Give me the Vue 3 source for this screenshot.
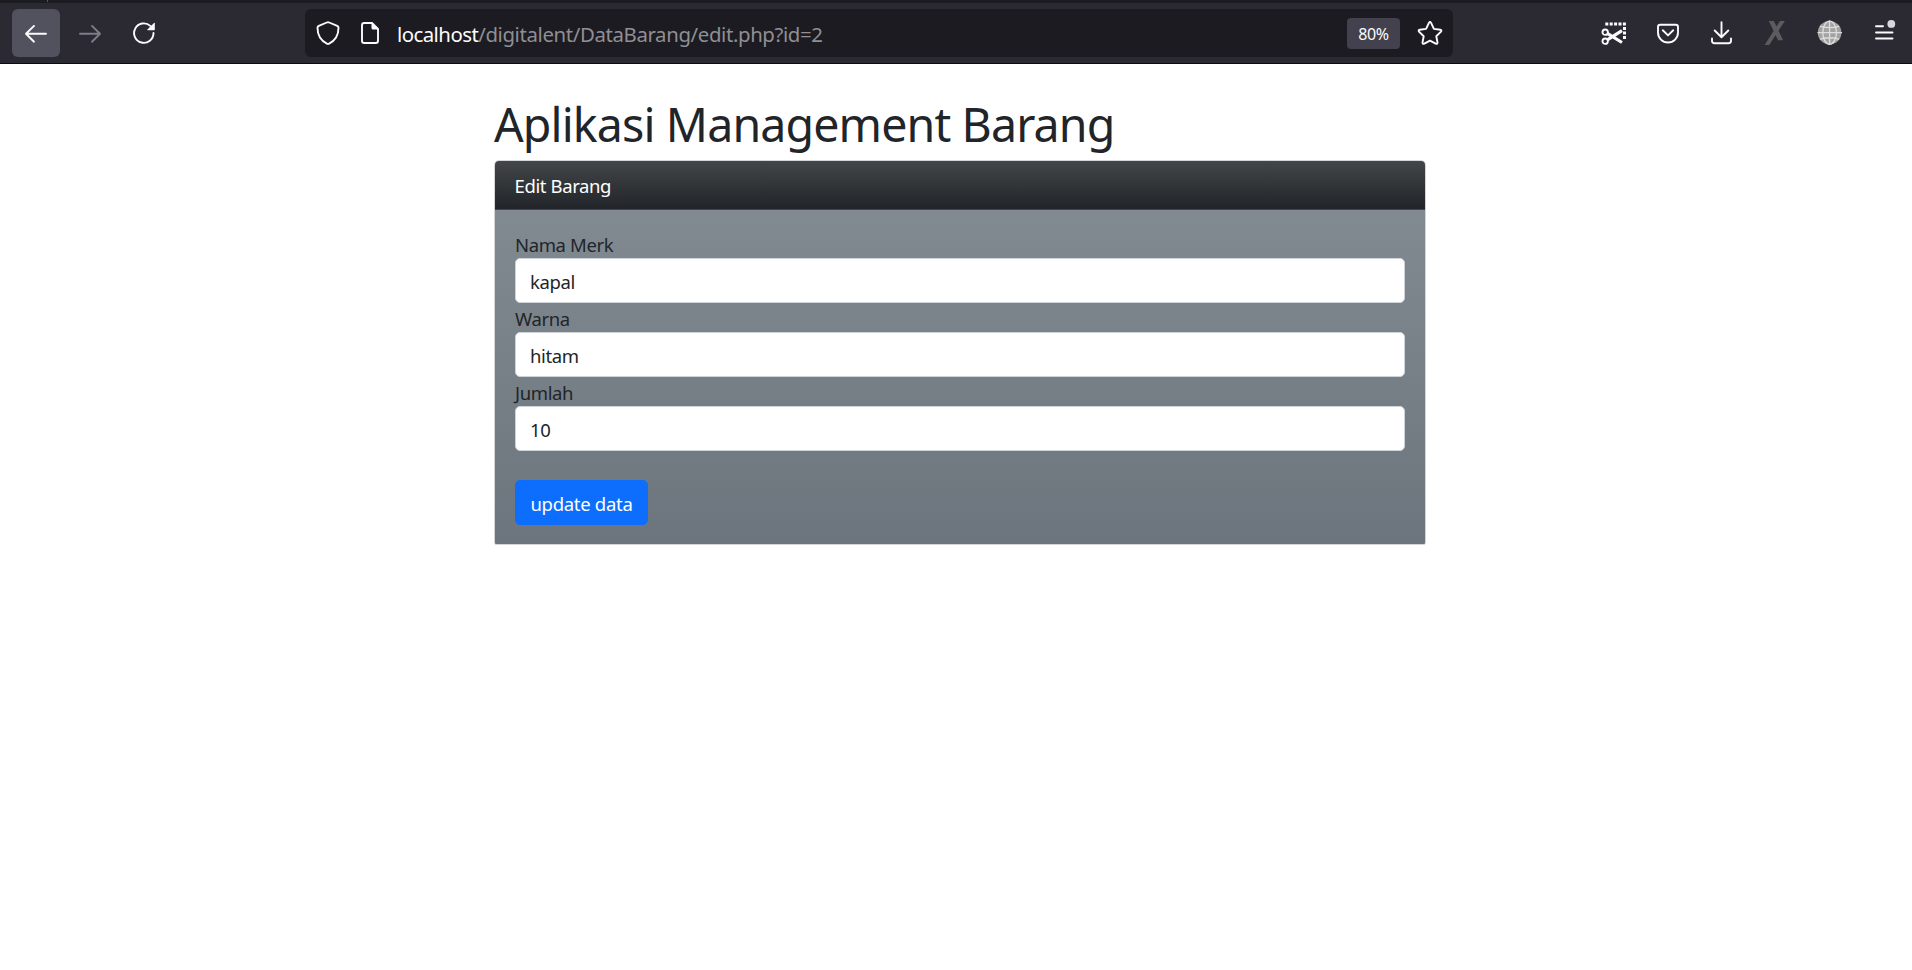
<template>
  <div class="window">
    <div class="tabstrip"><span class="tabstrip__separator"></span></div>

    <header class="toolbar">
      <div class="toolbar__group">
        <button class="toolbar__btn toolbar__btn--active" aria-label="Back">
          <svg class="icon" viewBox="0 0 24 24">
            <path d="M22 12.800H2.400M10 4.900L2 12.800l8 7.900" />
          </svg>
        </button>
        <button class="toolbar__btn toolbar__btn--disabled" aria-label="Forward">
          <svg class="icon" viewBox="0 0 24 24">
            <path d="M2 12.800H21.600M14 4.900l8 7.900l-8 7.900" />
          </svg>
        </button>
        <button class="toolbar__btn" aria-label="Reload">
          <svg class="icon" viewBox="0 0 24 24">
            <path d="M18.3 4.9A9.7 9.7 0 1 0 21.5 12" />
            <path class="fill" d="M22 1.9q.8-.7.8.4v6.3q0 .7-.7.7h-6.3q-1.1 0-.4-.8z" />
          </svg>
        </button>
      </div>

      <div class="urlbar">
        <svg class="icon urlbar__shield" viewBox="0 0 24 24">
          <path d="M12 1.2c.4 0 .8.1 1.2.3l8 3.4c.9.4 1.3 1 1.3 1.9C22.5 14.700 19 19.700 13.100 22.700c-.8.4-1.400.4-2.200 0C5 19.700 1.500 14.700 1.500 6.800c0-.9.4-1.500 1.300-1.900l8-3.400c.4-.2.8-.3 1.200-.3z" />
        </svg>
        <svg class="icon urlbar__page" viewBox="0 0 24 24">
          <path d="M14 2H6.300Q4 2 4 4.300v15.400Q4 22 6.300 22h11.400Q20 22 20 19.700V8z" />
          <path class="fill" d="M13.500 1.500V7q0 1.500 1.500 1.500h5.500z" />
        </svg>
        <span class="urlbar__text"><b>{{ url.host }}</b>{{ url.path }}</span>
        <span class="urlbar__zoom">80%</span>
        <svg class="icon urlbar__star" viewBox="0 0 24 24">
          <path d="M10.900 1.900q1.100-1.700 2.200 0l2.800 6l6.400.8q1.700.5.7 1.900l-4.700 4.600l1.200 6.300q0 1.900-1.800 1.200L12 19.600l-5.700 3.100q-1.800.7-1.800-1.200l1.200-6.300L1 10.600q-1-1.400.7-1.900l6.400-.8z" />
        </svg>
      </div>

      <div class="toolbar__group">
        <button class="toolbar__btn" aria-label="Screenshot">
          <svg class="icon" viewBox="0 0 24 24">
            <path class="dash" d="M3.300 3.100H24M22.500 6.100V18" />
            <circle cx="3.200" cy="11.200" r="2.700" />
            <circle cx="3.200" cy="20.200" r="2.700" />
            <path class="blade" d="M5.300 18.900L20 9.600M5.300 12.300L20 21.500" />
          </svg>
        </button>
        <button class="toolbar__btn" aria-label="Pocket">
          <svg class="icon" viewBox="0 0 24 24">
            <path d="M4.200 3.800h15.600q2.200 0 2.200 2.200v5.500a10 10 0 0 1-20 0V6q0-2.200 2.200-2.200z" />
            <path d="M6.800 9.300L12 14.400l5.200-5.100" />
          </svg>
        </button>
        <button class="toolbar__btn" aria-label="Downloads">
          <svg class="icon" viewBox="0 0 24 24">
            <path d="M11.500 1.300v14.700M4.700 9.500l6.800 6.700L18.300 9.500" />
            <path d="M2 17.500v2.300q0 2.500 2.500 2.500h14q2.500 0 2.500-2.500v-2.300" />
          </svg>
        </button>
        <button class="toolbar__btn" aria-label="Extension">
          <svg class="icon" viewBox="0 0 24 24">
            <path class="letter" d="M4.800 0h5l9.300 19.200h-5zM16 0h4.800L5.200 24H.6z" />
          </svg>
        </button>
        <button class="toolbar__btn" aria-label="Language">
          <svg class="icon icon--globe" viewBox="0 0 24 24">
            <circle cx="11.600" cy="11.700" r="11.800" />
            <path d="M11.600 0v23.400M0 11.700h23.500M2.500 5.300Q11.600 8 20.700 5.300M2.500 18.100Q11.600 15.400 20.700 18.100" />
            <ellipse cx="11.600" cy="11.700" rx="6.800" ry="11.600" />
          </svg>
        </button>
        <button class="toolbar__btn" aria-label="Menu">
          <svg class="icon" viewBox="0 0 24 24">
            <path d="M4 5.300h7M4 11.500h16.500M4 17.500h16.500" />
            <circle class="dot" cx="19.300" cy="2.900" r="3.900" />
          </svg>
        </button>
      </div>
    </header>

    <main class="container">
      <h1 class="title">Aplikasi Management Barang</h1>

      <section class="card">
        <div class="card__header">Edit Barang</div>
        <form class="card__body" @submit.prevent>
          <div v-for="field in fields" :key="field.name" class="form-group">
            <label class="form-group__label" :for="field.name">{{ field.label }}</label>
            <input
              :id="field.name"
              v-model="field.value"
              class="form-group__input"
              type="text"
              autocomplete="off"
            />
          </div>
          <button class="btn" type="submit">update data</button>
        </form>
      </section>
    </main>
  </div>
</template>

<script setup>
import { reactive } from 'vue'

const url = {
  host: 'localhost',
  path: '/digitalent/DataBarang/edit.php?id=2',
}

const fields = reactive([
  { name: 'merk', label: 'Nama Merk', value: 'kapal' },
  { name: 'warna', label: 'Warna', value: 'hitam' },
  { name: 'jumlah', label: 'Jumlah', value: '10' },
])
</script>

<style>
body {
  margin: 0;
  background: #fff;
}
</style>

<style scoped>
.window {
  height: 970px;
  overflow: hidden;
  background: #fff;
  color: #212529;
  font-family: 'Noto Sans', 'Open Sans', sans-serif;
  font-size: 18.5px;
  letter-spacing: -0.38px;
}

/* ---------- Browser toolbar ---------- */
.tabstrip {
  display: flex;
  height: 3px;
  padding-left: 47px;
  background: #1c1b22;
}

.tabstrip__separator {
  width: 1px;
  height: 2px;
  background: #55545e;
}

.toolbar {
  display: flex;
  align-items: center;
  box-sizing: border-box;
  height: 61px;
  padding: 0 4px 0 12px;
  border-bottom: 1px solid #0c0c0d;
  background: #2b2a33;
}

.toolbar__group {
  display: flex;
  gap: 6px;
}

.toolbar__btn {
  display: flex;
  align-items: center;
  justify-content: center;
  width: 48px;
  height: 48px;
  padding: 0;
  border: none;
  border-radius: 6px;
  background: transparent;
  color: #fbfbfe;
}

.toolbar__btn--active {
  background: #52525e;
}

.toolbar__btn--disabled {
  color: #7e7d86;
}

.icon {
  flex: none;
  width: 24px;
  height: 24px;
  overflow: visible;
  fill: none;
  stroke: currentColor;
  stroke-width: 1.9;
  stroke-linecap: round;
  stroke-linejoin: round;
}

.icon .fill,
.icon .dot {
  fill: currentColor;
  stroke: none;
}

.icon .dot {
  fill: #d7d7db;
}

.icon .dash {
  stroke-width: 3;
  stroke-dasharray: 3 1.4;
  stroke-linecap: butt;
}

.icon .blade {
  stroke-width: 3.2;
  stroke-linecap: butt;
}

.icon .letter {
  fill: #5c5c5e;
  stroke: none;
}

.icon--globe {
  fill: #a3a3a3;
  stroke: #dedede;
  stroke-width: 1.3;
}

.icon--globe path,
.icon--globe ellipse {
  fill: none;
}

.icon--globe circle {
  stroke: none;
}

.urlbar {
  display: flex;
  align-items: center;
  box-sizing: border-box;
  width: 1148px;
  height: 48px;
  margin: 0 auto 0 137px;
  padding: 0 11px;
  border-radius: 6px;
  background: #1c1b22;
  color: #fbfbfe;
}

.urlbar__page {
  margin-left: 18px;
}

.urlbar__text {
  margin-left: 15px;
  padding-top: 2px;
  color: #8f8f94;
  font-size: 20.4px;
  letter-spacing: -0.38px;
}

.urlbar__text b {
  color: #fbfbfe;
  font-weight: 400;
  letter-spacing: -0.55px;
}

.urlbar__zoom {
  width: 53px;
  height: 31px;
  margin-left: auto;
  border-radius: 4px;
  background: #42414d;
  font-size: 16px;
  line-height: 32px;
  text-align: center;
}

.urlbar__star {
  margin-left: 18px;
}

/* ---------- Page ---------- */
.container {
  box-sizing: border-box;
  width: 932px;
  margin-left: 494px;
  padding-top: 32px;
}

.title {
  height: 64px;
  margin: 0;
  font-size: 46.5px;
  font-weight: 400;
  line-height: 57px;
  letter-spacing: -0.86px;
  white-space: nowrap;
}

.card {
  border: 1px solid #d3d5d7;
  border-radius: 5px 5px 2px 2px;
  overflow: hidden;
}

.card__header {
  box-sizing: border-box;
  height: 49px;
  padding: 1px 19.5px 0;
  border-bottom: 1px solid #42464a;
  background: linear-gradient(180deg, #424649, #212529);
  color: #fff;
  line-height: 48px;
}

.card__body {
  display: flex;
  flex-direction: column;
  align-items: stretch;
  padding: 19px 20px;
  background: linear-gradient(180deg, #828a91, #6c757d);
}

.form-group {
  display: flex;
  flex-direction: column;
}

.form-group__label {
  height: 29px;
  line-height: 31px;
}

.form-group__input {
  box-sizing: border-box;
  width: 100%;
  height: 45px;
  padding: 2px 14px 0;
  border: 1px solid #ced4da;
  border-radius: 5px;
  outline: none;
  background: #fff;
  color: #212529;
  font: inherit;
  letter-spacing: inherit;
}

.btn {
  align-self: flex-start;
  width: 133px;
  height: 45px;
  margin-top: 29px;
  padding: 2px 0 0;
  border: 1px solid #0d6efd;
  border-radius: 5px;
  background: #0d6efd;
  color: #fff;
  font: inherit;
  letter-spacing: -0.3px;
}
</style>
